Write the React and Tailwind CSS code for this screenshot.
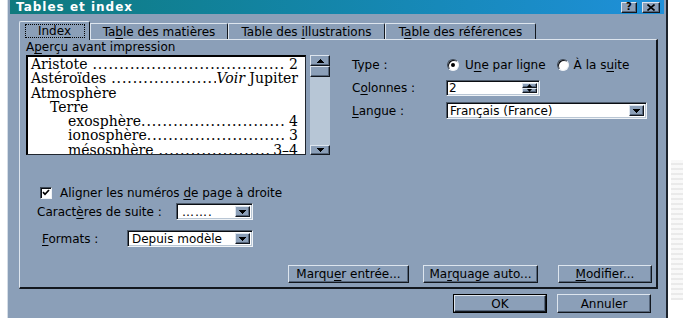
import React from "react";

const U = ({ children }) => (
  <span className="underline underline-offset-[2px] decoration-1">{children}</span>
);

const raised =
  "border border-t-[#dde5ee] border-l-[#dde5ee] border-b-[#12171e] border-r-[#12171e] shadow-[inset_-1px_-1px_0_#56667b]";
const sunken =
  "border border-t-[#4d5a6a] border-l-[#4d5a6a] border-b-[#eef2f6] border-r-[#eef2f6] shadow-[inset_1px_1px_0_#0a0d12,inset_-1px_-1px_0_#b9c6d4]";

function Tri({ up }) {
  return (
    <svg width="7" height="4" viewBox="0 0 7 4" shapeRendering="crispEdges">
      <path d={up ? "M3.5 0L7 4H0z" : "M0 0h7L3.5 4z"} fill="#000" />
    </svg>
  );
}

function DropBtn() {
  return (
    <div className={`w-[15px] h-full bg-[#8b9fb8] flex items-center justify-center ${raised}`}>
      <Tri />
    </div>
  );
}

function Combo({ className, text, textClass }) {
  return (
    <div className={`flex items-stretch bg-white p-[2px] ${sunken} ${className}`}>
      <div className={`flex-1 flex items-center text-[12px] leading-none ${textClass}`}>
        <span>{text}</span>
      </div>
      <DropBtn />
    </div>
  );
}

function Btn({ children, className }) {
  return (
    <div className={`flex items-center justify-center bg-[#8b9fb8] text-[12px] text-black ${raised} ${className}`}>
      <span>{children}</span>
    </div>
  );
}

const DOTS = ".".repeat(120);

function Leader({ indent, word, space, right, rightGap }) {
  return (
    <div className={`flex items-center h-[14.3px] whitespace-nowrap ${indent}`}>
      <span>{word}</span>
      <span className={`flex-1 overflow-hidden tracking-[0.9px] ${space ? "ml-[5px]" : ""}`}>{DOTS}</span>
      <span className={rightGap ? "pl-[5px]" : "pl-[1px]"}>{right}</span>
    </div>
  );
}

function Radio({ checked }) {
  return (
    <div className="w-[12px] h-[12px] shrink-0 rounded-full bg-white border border-t-[#3d4856] border-l-[#3d4856] border-b-[#eef2f6] border-r-[#eef2f6] shadow-[inset_1px_1px_0_#0a0d12] flex items-center justify-center">
      {checked && <div className="w-[4px] h-[4px] rounded-full bg-black" />}
    </div>
  );
}

const tabCls =
  "h-[16px] border-t border-l border-t-[#dde5ee] border-l-[#dde5ee] border-r border-r-[#12171e] rounded-tr-[2px] flex items-center justify-center leading-none";

export default function App() {
  return (
    <div className="w-[684px] h-[318px] bg-white flex overflow-hidden font-['DejaVu_Sans',Verdana,sans-serif] text-black">
      <div className="ml-[7px] w-[661px] h-[318px] shrink-0 bg-[#8b9fb8] border-l border-l-[#d5dde6] border-r-2 border-r-[#1c232c] px-[2px] flex flex-col">
        {/* title bar */}
        <div className="h-[14px] shrink-0 bg-linear-to-r from-[#0f7a7d] to-[#1f90da] flex items-center justify-between pl-[6px] pr-[4px]">
          <span className="text-white font-bold text-[12px] tracking-[1px] leading-none">Tables et index</span>
          <div className="flex items-center gap-[5px] h-[11px]">
            <div className={`w-[16px] h-[11px] bg-[#8b9fb8] flex items-center justify-center text-[10px] font-bold leading-none ${raised}`}>
              <span>?</span>
            </div>
            <div className={`w-[18px] h-[11px] bg-[#8b9fb8] flex items-center justify-center ${raised}`}>
              <svg width="8" height="7" viewBox="0 0 8 7">
                <path d="M0.5 0.5L7.5 6.5M7.5 0.5L0.5 6.5" stroke="#000" strokeWidth="1.6" />
              </svg>
            </div>
          </div>
        </div>

        {/* tabs */}
        <div className="mt-[7px] h-[18px] pl-[9px] flex items-end text-[12px]">
          <div className="relative z-10 w-[71px] h-[19px] -mb-px bg-[#8b9fb8] border-t border-l border-t-[#dde5ee] border-l-[#dde5ee] border-r border-r-[#12171e] rounded-tl-[2px] rounded-tr-[2px] flex items-start justify-center pt-[2px]">
            <div className="w-[60px] h-[14px] border border-dotted border-black flex items-center justify-center leading-none">
              <span>Inde<U>x</U></span>
            </div>
          </div>
          <div className={`w-[138px] ${tabCls}`}>
            <span>Ta<U>b</U>le des matières</span>
          </div>
          <div className={`w-[157px] ${tabCls}`}>
            <span>Table des <U>i</U>llustrations</span>
          </div>
          <div className={`w-[151px] ${tabCls}`}>
            <span>T<U>a</U>ble des références</span>
          </div>
        </div>

        {/* panel */}
        <div className="ml-[9px] w-[639px] h-[250px] shrink-0 border-t border-l border-t-[#dde5ee] border-l-[#dde5ee] border-r-2 border-b-2 border-r-[#12171e] border-b-[#12171e] flex flex-col">
          <div className="flex">
            {/* left column */}
            <div className="pl-[6px] flex flex-col">
              <div className="h-[14px] text-[12px] leading-[14px]">
                <span>A<U>p</U>erçu avant impression</span>
              </div>
              <div className="mt-[1px] flex h-[100px]">
                <div className="w-[280px] h-[100px] bg-white border-t-2 border-l-2 border-t-black border-l-black border-r border-b border-r-[#20262e] border-b-[#20262e] overflow-hidden pl-[3px] pr-[7px] font-['DejaVu_Serif',serif] text-[14px] leading-[14.3px]">
                  <Leader word="Aristote" space right="2" rightGap indent="" />
                  <div className="flex items-center h-[14.3px] whitespace-nowrap">
                    <span>Astéroïdes</span>
                    <span className="flex-1 overflow-hidden ml-[5px] tracking-[0.9px]">{DOTS}</span>
                    <span className="italic">Voir</span>
                    <span>&nbsp;Jupiter</span>
                  </div>
                  <div className="h-[14.3px]">Atmosphère</div>
                  <div className="h-[14.3px] pl-[19px]">Terre</div>
                  <Leader word="exosphère" right="4" rightGap indent="pl-[37px]" />
                  <Leader word="ionosphère" right="3" rightGap indent="pl-[37px]" />
                  <Leader word="mésosphère" space right="3–4" indent="pl-[37px]" />
                </div>
                {/* scrollbar */}
                <div className="ml-[4px] w-[20px] h-[100px] flex flex-col bg-[#b7c6d6]">
                  <div className={`h-[11px] bg-[#8b9fb8] flex items-center justify-center ${raised}`}>
                    <Tri up />
                  </div>
                  <div className={`h-[11px] bg-[#8b9fb8] ${raised}`} />
                  <div className="flex-1" />
                  <div className={`h-[10px] bg-[#8b9fb8] flex items-center justify-center ${raised}`}>
                    <Tri />
                  </div>
                </div>
              </div>
            </div>

            {/* right column */}
            <div className="ml-[22px] pt-[17px] flex flex-col text-[12px]">
              <div className="h-[16px] flex items-center whitespace-nowrap">
                <span className="w-[94px]">Type :</span>
                <div className="ml-[1px]"><Radio checked /></div>
                <span className="ml-[6px]">U<U>n</U>e par ligne</span>
                <div className="ml-[11px]"><Radio /></div>
                <span className="ml-[5px]">À la s<U>u</U>ite</span>
              </div>
              <div className="mt-[7px] h-[16px] flex items-center">
                <span className="w-[94px]">C<U>o</U>lonnes :</span>
                <div className={`w-[94px] h-[16px] bg-white flex items-stretch p-[2px] ${sunken}`}>
                  <div className="flex-1 flex items-center leading-none"><span>2</span></div>
                  <div className="w-[15px] flex flex-col">
                    <div className={`flex-1 bg-[#8b9fb8] flex items-center justify-center ${raised}`}>
                      <svg width="5" height="3" viewBox="0 0 5 3"><path d="M2.5 0L5 3H0z" fill="#000" /></svg>
                    </div>
                    <div className={`flex-1 bg-[#8b9fb8] flex items-center justify-center ${raised}`}>
                      <svg width="5" height="3" viewBox="0 0 5 3"><path d="M0 0h5L2.5 3z" fill="#000" /></svg>
                    </div>
                  </div>
                </div>
              </div>
              <div className="mt-[6px] h-[17px] flex items-center">
                <span className="w-[94px]"><U>L</U>angue :</span>
                <Combo className="w-[201px] h-[17px]" text="Français (France)" textClass="pl-[1px]" />
              </div>
            </div>
          </div>

          {/* checkbox */}
          <div className="mt-[31px] h-[13px] pl-[20px] flex items-center text-[12px]">
            <div className="w-[12px] h-[12px] bg-white border border-t-[#3d4856] border-l-[#3d4856] border-b-[#eef2f6] border-r-[#eef2f6] shadow-[inset_1px_1px_0_#0a0d12] flex items-center justify-center">
              <svg width="8" height="7" viewBox="0 0 8 7">
                <path d="M1 3.2L3 5.3L7 1" stroke="#000" strokeWidth="1.7" fill="none" />
              </svg>
            </div>
            <span className="ml-[8px]">Aligner les numéros <U>d</U>e page à droite</span>
          </div>

          {/* caractères de suite */}
          <div className="mt-[4px] h-[17px] pl-[17px] flex items-center text-[12px]">
            <span className="w-[139px]">Caract<U>è</U>res de suite :</span>
            <Combo className="w-[77px] h-[17px]" text="……." textClass="pl-[3px] tracking-[1px]" />
          </div>

          {/* formats */}
          <div className="mt-[10px] h-[17px] pl-[22px] flex items-center text-[12px]">
            <span className="w-[85px]"><U>F</U>ormats :</span>
            <Combo className="w-[126px] h-[17px]" text="Depuis modèle" textClass="pl-[2px]" />
          </div>

          {/* action buttons */}
          <div className="mt-[18px] pl-[268px] flex">
            <Btn className="w-[121px] h-[18px]">Marqu<U>e</U>r entrée...</Btn>
            <Btn className="ml-[14px] w-[115px] h-[18px]">Ma<U>r</U>quage auto...</Btn>
            <Btn className="ml-[20px] w-[94px] h-[18px]"><U>M</U>odifier...</Btn>
          </div>
        </div>

        {/* bottom buttons */}
        <div className="mt-[5px] pl-[443px] flex">
          <div className="w-[94px] h-[19px] border border-black flex">
            <Btn className="flex-1">OK</Btn>
          </div>
          <Btn className="ml-[10px] w-[94px] h-[19px]">Annuler</Btn>
        </div>
      </div>
      <div className="ml-[3px] mt-[160px] w-[12px] h-[140px] bg-[repeating-linear-gradient(0deg,#dcdcdc_0px,#dcdcdc_2px,#f4f4f4_2px,#f4f4f4_5px)] opacity-60" />
    </div>
  );
}
